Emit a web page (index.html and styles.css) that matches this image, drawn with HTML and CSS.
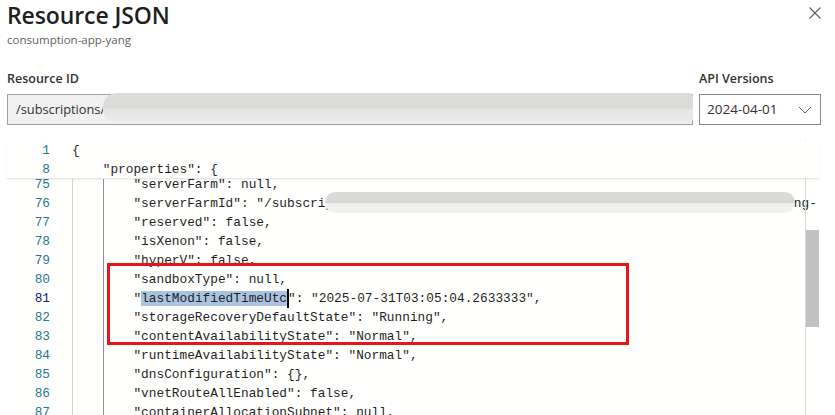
FILE: index.html
```html
<!DOCTYPE html>
<html>
<head>
<meta charset="utf-8">
<link rel="stylesheet" href="styles.css">
</head>
<body>
<div class="panel">
  <div class="head">
    <div class="titles">
      <h1 class="title">Resource JSON</h1>
      <div class="subtitle">consumption-app-yang</div>
    </div>
    <button class="close" aria-label="Close">
      <svg width="14" height="14" viewBox="0 0 14 14"><path d="M1.5 1.5 L12.5 12.5 M12.5 1.5 L1.5 12.5" stroke="#605e5c" stroke-width="1.1" fill="none"/></svg>
    </button>
  </div>
  <div class="fields">
    <div class="field grow">
      <label class="label">Resource ID</label>
      <div class="input">/subscriptions/.1111-2222-3333-4444/resourceGroups/yang-rg</div>
    </div>
    <div class="field api">
      <label class="label">API Versions</label>
      <div class="select">
        <span>2024-04-01</span>
        <svg width="14" height="8" viewBox="0 0 14 8"><path d="M1 1 L7 7 L13 1" stroke="#605e5c" stroke-width="1" fill="none"/></svg>
      </div>
    </div>
  </div>
  <div class="editor">
    <div class="sticky">
      <div class="row"><span class="ln">1</span><span class="code">{</span></div>
      <div class="row"><span class="ln">8</span><span class="code">    "properties": {</span></div>
    </div>
    <div class="scroll">
      <div class="gutter">
        <div class="ln first">75</div>
        <div class="ln">76</div>
        <div class="ln">77</div>
        <div class="ln">78</div>
        <div class="ln">79</div>
        <div class="ln">80</div>
        <div class="ln active">81</div>
        <div class="ln">82</div>
        <div class="ln">83</div>
        <div class="ln">84</div>
        <div class="ln">85</div>
        <div class="ln">86</div>
        <div class="ln">87</div>
      </div>
      <div class="lines">
        <div class="line first">        "serverFarm": null,</div>
        <div class="line">        "serverFarmId": "/subscriptions/11111111-2222-3333-4444-555555555555/resourceGroups/yang-</div>
        <div class="line">        "reserved": false,</div>
        <div class="line">        "isXenon": false,</div>
        <div class="line">        "hyperV": false,</div>
        <div class="line">        "sandboxType": null,</div>
        <div class="line">        "<span class="sel">lastModifiedTimeUtc</span><span class="caret"></span>": "2025-07-31T03:05:04.2633333",</div>
        <div class="line">        "storageRecoveryDefaultState": "Running",</div>
        <div class="line">        "contentAvailabilityState": "Normal",</div>
        <div class="line">        "runtimeAvailabilityState": "Normal",</div>
        <div class="line">        "dnsConfiguration": {},</div>
        <div class="line">        "vnetRouteAllEnabled": false,</div>
        <div class="line">        "containerAllocationSubnet": null,</div>
      </div>
    </div>
  </div>
</div>
<div class="blur blur-id"></div>
<div class="blur blur-line"></div>
<div class="scrollbar"><div class="thumb"></div></div>
<div class="redbox"></div>
</body>
</html>
```

FILE: styles.css
```css
* { box-sizing: border-box; }
html, body { margin: 0; padding: 0; background: #ffffff; }
body {
  font-family: "Open Sans", "Noto Sans", sans-serif;
  color: #323130;
  width: 835px;
  height: 415px;
  overflow: hidden;
}
.panel {
  padding: 0 14px 0 7px;
}
.head {
  display: flex;
  justify-content: space-between;
  align-items: flex-start;
}
.title {
  margin: 0;
  font-size: 23px;
  font-weight: 600;
  line-height: 30px;
  height: 30px;
  letter-spacing: -0.1px;
  color: #201f1e;
}
.subtitle {
  font-size: 11.5px;
  line-height: 16px;
  margin-top: 2px;
  color: #605e5c;
}
.close {
  border: 0;
  background: transparent;
  padding: 0;
  margin: 6px -1px 0 0;
  width: 14px;
  height: 14px;
  display: flex;
}
.fields {
  display: flex;
  gap: 6px;
  margin-top: 22px;
}
.field { display: flex; flex-direction: column; min-width: 0; }
.grow { flex: 1 1 0; }
.api { width: 122px; flex: none; }
.label {
  font-size: 12.5px;
  font-weight: 600;
  line-height: 18px;
  color: #323130;
  margin-bottom: 6px;
  white-space: nowrap;
}
.input {
  height: 31px;
  border: 1px solid #a19f9d;
  background: #f0f0f0;
  padding: 0 8px;
  font-size: 12.8px;
  line-height: 29px;
  color: #323130;
  white-space: nowrap;
  overflow: hidden;
}
.select {
  height: 31px;
  border: 1px solid #8a8886;
  background: #fff;
  padding: 0 8px 0 7px;
  font-size: 13.5px;
  line-height: 29px;
  display: flex;
  justify-content: space-between;
  align-items: center;
}
.editor {
  margin-top: 15px;
  width: 812px;
  font-family: "Liberation Mono", "DejaVu Sans Mono", monospace;
  font-size: 12.8px;
  color: #1f1f1f;
  position: relative;
}
.sticky {
  padding-top: 1px;
  height: 39px;
  border-bottom: 1px solid #e6e6e6;
  box-shadow: 0 1px 2px rgba(0,0,0,0.06);
  background: #fffffe;
  position: relative;
  z-index: 1;
}
.row {
  display: flex;
  height: 19px;
  line-height: 19px;
}
.row .ln {
  width: 65px;
  padding-right: 22px;
  text-align: right;
  color: #237893;
  flex: none;
}
.code { white-space: pre; }
.scroll {
  display: flex;
  height: 239px;
  overflow: hidden;
  background: #fffffe;
}
.gutter {
  width: 65px;
  flex: none;
}
.gutter .ln {
  height: 19px;
  line-height: 19px;
  text-align: right;
  padding-right: 22px;
  color: #237893;
}
.gutter .ln.active { color: #0b216f; }
.first { margin-top: -4px; }
.lines {
  flex: 1;
  overflow: hidden;
  background-image:
    linear-gradient(#d3d3d3, #d3d3d3),
    linear-gradient(#939393, #939393);
  background-size: 1px 100%, 1px 100%;
  background-repeat: no-repeat;
  background-position: 0 0, 31px 0;
}
.line {
  height: 19px;
  line-height: 19px;
  white-space: pre;
}
.sel { background: #aac3df; }
.caret {
  display: inline-block;
  width: 2px;
  height: 19px;
  background: #000;
  vertical-align: top;
  margin-right: -1px;
}
.blur {
  position: absolute;
  border-radius: 14px;
}
.blur-id {
  left: 103px;
  top: 93px;
  width: 590px;
  height: 29px;
  border-radius: 14px 4px 4px 14px;
  background:
    linear-gradient(180deg, #dcdcdb 0%, #d9d9d8 50%, #e6e6e5 58%, #ebebea 100%);
}
.blur-line {
  left: 325px;
  top: 192px;
  width: 470px;
  height: 21px;
  border-radius: 10px;
  background:
    linear-gradient(180deg, #dadad8 0%, #d8d8d6 50%, #eeeeec 52%, #f1f1ef 100%);
}
.scrollbar {
  position: absolute;
  left: 805px;
  top: 139px;
  width: 14px;
  height: 276px;
  border-left: 1px solid #d9d9d9;
}
.thumb {
  position: absolute;
  left: 0;
  top: 91px;
  width: 13px;
  height: 97px;
  background: #c1c1c1;
}
.redbox {
  position: absolute;
  left: 107px;
  top: 263px;
  width: 522px;
  height: 82px;
  border: 3px solid #e5161c;
}
```
